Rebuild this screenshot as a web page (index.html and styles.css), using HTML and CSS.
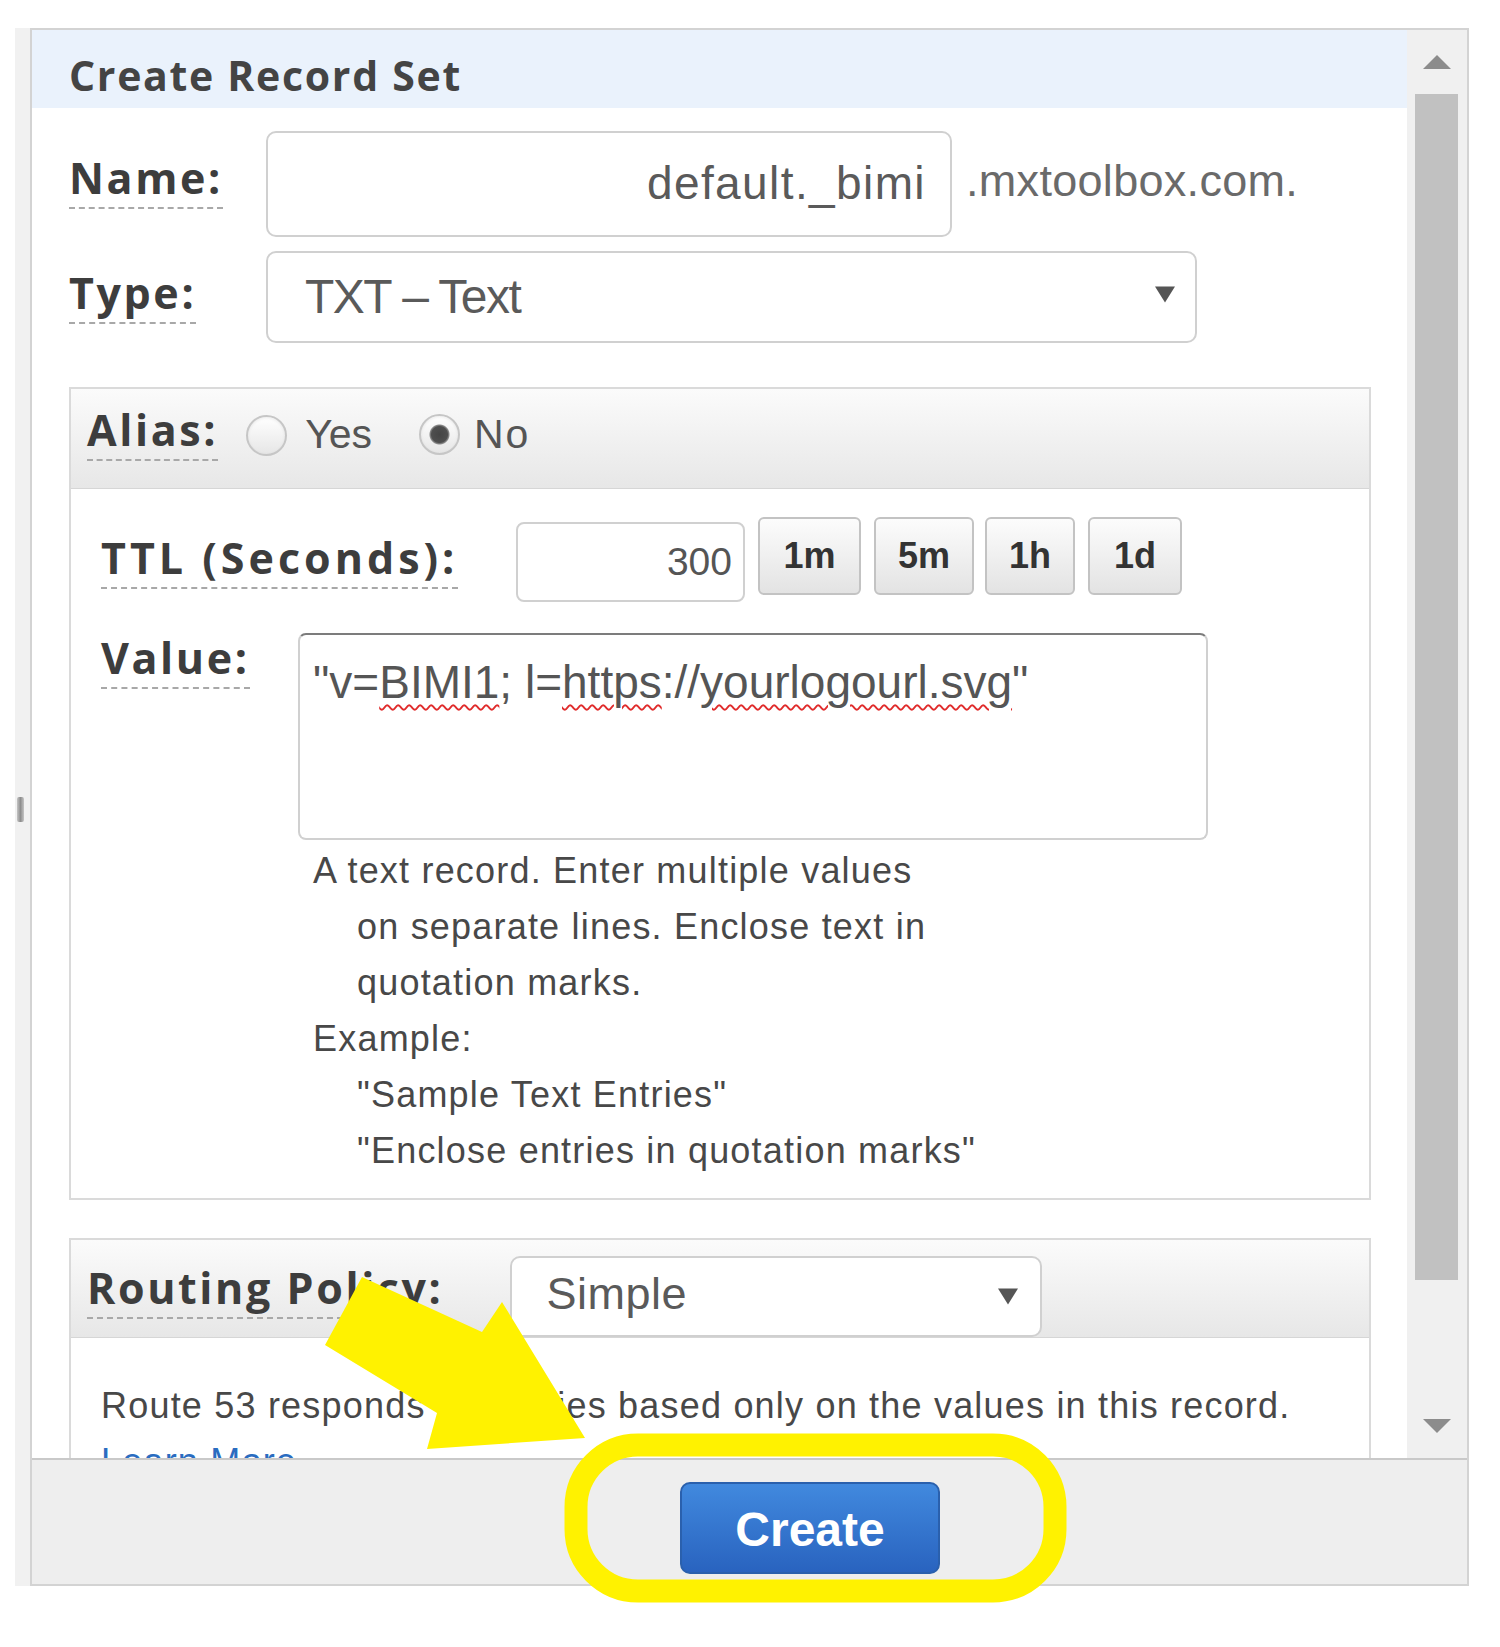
FILE: index.html
```html
<!DOCTYPE html>
<html lang="en">
<head>
<meta charset="utf-8">
<title>Create Record Set</title>
<link rel="stylesheet" href="styles.css">
</head>
<body>
<div class="dialog">
  <div class="main">
    <div class="content">
      <div class="title">Create Record Set</div>

      <div class="row row-name">
        <div class="lab-col"><span class="lab">Name:</span></div>
        <div class="field name-field">default._bimi</div>
        <span class="suffix">.mxtoolbox.com.</span>
      </div>

      <div class="row row-type">
        <div class="lab-col"><span class="lab">Type:</span></div>
        <div class="field select type-select">
          <span class="sel-text">TXT – Text</span>
          <svg class="caret" width="22" height="18" viewBox="0 0 22 18"><path d="M1 1.5h20L11 17.5z"/></svg>
        </div>
      </div>

      <section class="box alias-box">
        <div class="box-head">
          <span class="lab">Alias:</span>
          <span class="radio"></span><span class="opt opt-yes">Yes</span>
          <span class="radio checked"></span><span class="opt opt-no">No</span>
        </div>
        <div class="box-body">
          <div class="ttl-row">
            <div class="ttl-lab-col"><span class="lab lab-ttl">TTL (Seconds):</span></div>
            <div class="field ttl-input">300</div>
            <span class="tbtn">1m</span>
            <span class="tbtn">5m</span>
            <span class="tbtn">1h</span>
            <span class="tbtn">1d</span>
          </div>
          <div class="value-row">
            <div class="value-lab-col"><span class="lab">Value:</span></div>
            <div class="value-col">
              <div class="textarea">"v=<span class="misspelt">BIMI1</span>; l=<span class="misspelt">https</span>://<span class="misspelt">yourlogourl.svg</span>"</div>
              <div class="help">
                <p>A text record. Enter multiple values</p>
                <p class="indent">on separate lines. Enclose text in</p>
                <p class="indent">quotation marks.</p>
                <p>Example:</p>
                <p class="indent">"Sample Text Entries"</p>
                <p class="indent">"Enclose entries in quotation marks"</p>
              </div>
            </div>
          </div>
        </div>
      </section>

      <section class="box routing-box">
        <div class="box-head">
          <span class="lab">Routing Policy:</span>
          <div class="field select routing-select">
            <span class="sel-text">Simple</span>
            <svg class="caret" width="22" height="18" viewBox="0 0 22 18"><path d="M1 1.5h20L11 17.5z"/></svg>
          </div>
        </div>
        <div class="box-body routing-body">
          <p>Route 53 responds to queries based only on the values in this record.</p>
          <p><a class="learn" href="#">Learn More</a></p>
        </div>
      </section>
    </div>

    <div class="scrollbar">
      <div class="sb-btn sb-up"><svg width="28" height="14" viewBox="0 0 28 14"><path d="M14 0L28 14H0z"/></svg></div>
      <div class="thumb"></div>
      <div class="sb-fill"></div>
      <div class="sb-btn sb-down"><svg width="28" height="14" viewBox="0 0 28 14"><path d="M0 0h28L14 14z"/></svg></div>
    </div>
  </div>

  <div class="footer">
    <button class="create" type="button">Create</button>
  </div>
</div>

<span class="grip"></span>

<svg class="marks" width="1500" height="1647" viewBox="0 0 1500 1647">
  <polygon class="mark-fill" points="362,1277 482,1332 502,1302 585,1438 427,1449 437,1413 325,1345"/>
  <rect class="mark-ring" x="576" y="1445" width="479" height="146" rx="62" ry="62"/>
</svg>
</body>
</html>
```

FILE: styles.css
```css
html, body {
  margin: 0;
  padding: 0;
  background: #ffffff;
}

body {
  position: relative;
  width: 1500px;
  height: 1647px;
  overflow: hidden;
  font-family: "Liberation Sans", Arial, sans-serif;
  color: #555;
}

p {
  margin: 0;
}

/* ---------- dialog shell ---------- */
.dialog {
  margin: 28px 0 0 30px;
  width: 1439px;
  height: 1558px;
  box-sizing: border-box;
  border: 2px solid #d3d3d3;
  box-shadow: -15px 0 0 #f1f1f1;
  background: #fff;
  display: flex;
  flex-direction: column;
}

.main {
  display: flex;
  height: 1428px;
}

.content {
  flex: 1;
  overflow: hidden;
}

.title {
  height: 78px;
  box-sizing: border-box;
  padding: 12px 0 0 37px;
  line-height: 66px;
  background: #eaf2fc;
  font-family: "Open Sans", sans-serif;
  font-weight: 700;
  font-size: 41px;
  letter-spacing: 1.7px;
  color: #444;
}

/* ---------- labels ---------- */
.lab {
  display: inline-block;
  font-family: "Open Sans", sans-serif;
  font-weight: 700;
  font-size: 43px;
  line-height: 50px;
  letter-spacing: 2.6px;
  padding-bottom: 4px;
  border-bottom: 2px dashed #a8a8a8;
  color: #3d3d3d;
  white-space: nowrap;
}

.lab-ttl {
  letter-spacing: 4px;
}

/* ---------- fields ---------- */
.row {
  display: flex;
  align-items: flex-start;
  padding-left: 37px;
}

.lab-col {
  width: 197px;
  flex: none;
}

.field {
  box-sizing: border-box;
  border: 2px solid #d0d0d0;
  background: #fff;
  color: #5a5a5a;
  white-space: nowrap;
}

.row-name {
  margin-top: 23px;
}

.row-name .lab-col {
  padding-top: 22px;
}

.name-field {
  width: 686px;
  height: 106px;
  border-radius: 10px;
  text-align: right;
  padding-right: 24px;
  font-size: 46px;
  line-height: 100px;
  letter-spacing: 1.4px;
}

.suffix {
  margin-left: 14px;
  font-size: 45px;
  line-height: 100px;
  letter-spacing: 0.3px;
  color: #6a6a6a;
}

.row-type {
  margin-top: 14px;
}

.row-type .lab-col {
  padding-top: 17px;
}

.select {
  display: flex;
  justify-content: space-between;
  align-items: flex-start;
}

.caret {
  flex: none;
  fill: #555;
}

.type-select {
  width: 931px;
  height: 92px;
  border-radius: 10px;
  padding: 0 19px 0 37px;
  font-size: 48px;
  line-height: 88px;
  letter-spacing: -1.5px;
}

.type-select .caret {
  margin-top: 32px;
}

/* ---------- grouped boxes ---------- */
.box {
  margin-left: 37px;
  width: 1302px;
  box-sizing: border-box;
  border: 2px solid #dadada;
  background: #fff;
}

.box-head {
  display: flex;
  align-items: flex-start;
  box-sizing: border-box;
  padding-left: 16px;
  background: linear-gradient(#fbfbfb, #e7e7e7);
  border-bottom: 1px solid #d6d6d6;
}

.alias-box {
  margin-top: 44px;
}

.alias-box .box-head {
  height: 100px;
}

.alias-box .box-head .lab {
  margin-top: 16px;
}

.radio {
  flex: none;
  width: 41px;
  height: 41px;
  box-sizing: border-box;
  border-radius: 50%;
  border: 2px solid #c6c6c6;
  background: linear-gradient(#ffffff, #e6e6e6);
  box-shadow: inset 0 1px 3px rgba(0, 0, 0, 0.08);
  margin: 26px 0 0 28px;
}

.radio.checked {
  margin: 25px 0 0 47px;
  background:
    radial-gradient(circle, #454545 0, #4f4f4f 8px, #8a8a8a 9.5px, transparent 10.5px),
    linear-gradient(#ffffff, #e6e6e6);
}

.opt {
  font-size: 41px;
  line-height: 50px;
  margin-top: 20px;
  color: #555;
}

.opt-yes {
  margin-left: 18px;
}

.opt-no {
  margin-left: 14px;
  letter-spacing: 2px;
}

.box-body {
  padding: 28px 0 19px 30px;
}

/* TTL */
.ttl-row {
  display: flex;
  align-items: flex-start;
}

.ttl-lab-col {
  width: 415px;
  flex: none;
  padding-top: 16px;
}

.ttl-input {
  margin-top: 5px;
  width: 229px;
  height: 80px;
  border-radius: 8px;
  text-align: right;
  padding-right: 11px;
  font-size: 39px;
  line-height: 76px;
  color: #555;
}

.tbtn {
  flex: none;
  box-sizing: border-box;
  height: 78px;
  margin-left: 13px;
  border: 2px solid #c3c3c3;
  border-radius: 6px;
  background: linear-gradient(#fcfcfc, #e3e3e3);
  text-align: center;
  font-weight: 700;
  font-size: 36px;
  line-height: 74px;
  color: #333;
}

.tbtn:nth-child(3) { width: 103px; }
.tbtn:nth-child(4) { width: 100px; }
.tbtn:nth-child(5) { width: 90px; margin-left: 11px; }
.tbtn:nth-child(6) { width: 94px; }

/* Value */
.value-row {
  display: flex;
  align-items: flex-start;
  margin-top: 31px;
}

.value-lab-col {
  width: 197px;
  flex: none;
}

.value-col {
  width: 910px;
  flex: none;
}

.textarea {
  height: 207px;
  box-sizing: border-box;
  border: 2px solid #d0d0d0;
  border-top-color: #7c7c7c;
  border-radius: 8px;
  padding: 16px 13px 0;
  font-size: 46px;
  line-height: 62px;
  color: #555;
  white-space: nowrap;
}

.misspelt {
  text-decoration: underline wavy #e02b2b;
  text-decoration-thickness: 2px;
  text-underline-offset: 6px;
}

.help {
  margin: 3px 0 0 15px;
  font-size: 36px;
  line-height: 56px;
  color: #484848;
  letter-spacing: 1.2px;
  white-space: nowrap;
}

.help .indent {
  padding-left: 44px;
}

/* Routing */
.routing-box {
  margin-top: 38px;
}

.routing-box .box-head {
  height: 98px;
}

.routing-box .box-head .lab {
  margin-top: 23px;
}

.routing-select {
  margin: 16px 0 0 67px;
  width: 532px;
  height: 81px;
  border-radius: 10px;
  padding: 0 21px 0 34px;
  font-size: 45px;
  line-height: 71px;
  letter-spacing: 0.5px;
}

.routing-select .caret {
  margin-top: 29px;
}

.routing-body {
  padding: 40px 0 0 30px;
  font-size: 36px;
  line-height: 56px;
  color: #484848;
  letter-spacing: 1.2px;
  white-space: nowrap;
}

.learn {
  color: #2a6cc0;
  text-decoration: none;
}

/* ---------- scrollbar ---------- */
.scrollbar {
  width: 60px;
  flex: none;
  background: #f0f0f0;
  display: flex;
  flex-direction: column;
}

.sb-btn {
  display: flex;
  justify-content: center;
  align-items: center;
  fill: #8c8c8c;
}

.sb-up {
  height: 64px;
}

.sb-down {
  height: 64px;
}

.thumb {
  height: 1186px;
  margin: 0 9px 0 8px;
  background: #c1c1c1;
}

.sb-fill {
  flex: 1;
}

/* ---------- footer ---------- */
.footer {
  height: 126px;
  box-sizing: border-box;
  border-top: 2px solid #c9c9c9;
  background: #eeeeee;
  padding: 22px 0 0 648px;
}

.create {
  display: block;
  width: 260px;
  height: 92px;
  box-sizing: border-box;
  margin: 0;
  padding: 4px 0 0;
  border: 2px solid #2a60ad;
  border-radius: 10px;
  background: linear-gradient(#4189de, #2963bf);
  color: #fff;
  font-family: "Liberation Sans", Arial, sans-serif;
  font-weight: 700;
  font-size: 48px;
  line-height: 84px;
  text-align: center;
}

/* ---------- overlays ---------- */
.grip {
  position: absolute;
  left: 17px;
  top: 797px;
  width: 7px;
  height: 25px;
  border-radius: 2px;
  background: linear-gradient(90deg, #c4c4c4, #8e8e8e, #c4c4c4);
}

.marks {
  position: absolute;
  left: 0;
  top: 0;
  pointer-events: none;
}

.mark-fill {
  fill: #fff200;
}

.mark-ring {
  fill: none;
  stroke: #fff200;
  stroke-width: 23;
}
```
